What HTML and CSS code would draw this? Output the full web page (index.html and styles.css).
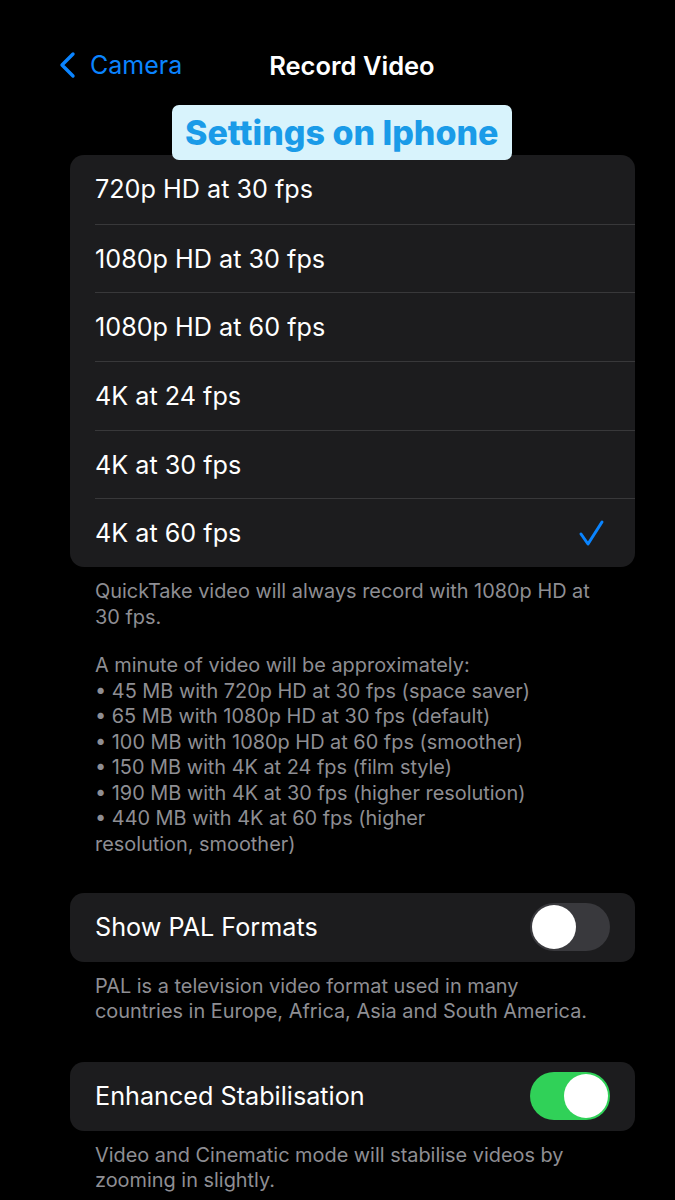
FILE: index.html
```html
<!DOCTYPE html>
<html lang="en">
<head>
    <meta charset="UTF-8">
    <meta name="viewport" content="width=device-width, initial-scale=1.0">
    <title>Record Video</title>
    <link rel="stylesheet" href="styles.css">
</head>
<body>
    <div class="screen">
        <div class="nav">
            <a class="back" href="#">
                <svg class="chevron" width="20" height="28" viewBox="0 0 20 28">
                    <polyline points="15,3 4,14 15,25" fill="none" stroke="#0a84ff" stroke-width="3.4" stroke-linecap="round" stroke-linejoin="round"/>
                </svg>
                <span>Camera</span>
            </a>
            <div class="title">Record Video</div>
        </div>

        <div class="badge-row">
            <div class="badge">Settings on Iphone</div>
        </div>

        <div class="group">
            <div class="row"><span>720p HD at 30 fps</span></div>
            <div class="row"><span>1080p HD at 30 fps</span></div>
            <div class="row"><span>1080p HD at 60 fps</span></div>
            <div class="row"><span>4K at 24 fps</span></div>
            <div class="row"><span>4K at 30 fps</span></div>
            <div class="row">
                <span>4K at 60 fps</span>
                <svg class="check" width="28" height="28" viewBox="0 0 28 28">
                    <polyline points="4,15 11,25 25,3" fill="none" stroke="#0a84ff" stroke-width="3" stroke-linecap="round" stroke-linejoin="round"/>
                </svg>
            </div>
        </div>
        <div class="note note-long">
            <p>QuickTake video will always record with 1080p HD at 30 fps.</p>
            <p>A minute of video will be approximately:<br>
            • 45 MB with 720p HD at 30 fps (space saver)<br>
            • 65 MB with 1080p HD at 30 fps (default)<br>
            • 100 MB with 1080p HD at 60 fps (smoother)<br>
            • 150 MB with 4K at 24 fps (film style)<br>
            • 190 MB with 4K at 30 fps (higher resolution)<br>
            • 440 MB with 4K at 60 fps (higher<br>
            resolution, smoother)</p>
        </div>

        <div class="group">
            <div class="row">
                <span>Show PAL Formats</span>
                <div class="toggle"><div class="knob"></div></div>
            </div>
        </div>
        <div class="note">
            <p>PAL is a television video format used in many countries in Europe, Africa, Asia and South America.</p>
        </div>

        <div class="group">
            <div class="row">
                <span>Enhanced Stabilisation</span>
                <div class="toggle on"><div class="knob"></div></div>
            </div>
        </div>
        <div class="note">
            <p>Video and Cinematic mode will stabilise videos by zooming in slightly.</p>
        </div>
    </div>
</body>
</html>
```

FILE: styles.css
```css
body {
    margin: 0;
    padding: 0;
    background-color: #000;
    color: #fff;
    font-family: Inter, "Noto Sans", sans-serif;
}
.screen {
    width: 675px;
    height: 1200px;
    overflow: hidden;
}
.nav {
    display: flex;
    align-items: center;
    height: 50px;
    padding: 40px 0 0 58px;
}
.back {
    display: flex;
    align-items: center;
    gap: 12px;
    color: #0a84ff;
    text-decoration: none;
    font-size: 25px;
}
.chevron {
    display: block;
}
.title {
    margin-left: 87px;
    font-size: 25.5px;
    font-weight: 600;
}
.badge-row {
    display: flex;
    padding: 15px 0 0 172px;
    margin-bottom: -5px;
    position: relative;
    z-index: 1;
}
.badge {
    background-color: #d8f3fc;
    color: #1a9be8;
    font-size: 34px;
    font-weight: 800;
    line-height: 55px;
    padding: 0 13px;
    border-radius: 7px;
}
.group {
    background-color: #1c1c1e;
    border-radius: 14px;
    margin: 0 40px 0 70px;
    padding-left: 25px;
}
.row {
    display: flex;
    align-items: center;
    justify-content: space-between;
    box-sizing: border-box;
    height: 68.7px;
    padding-right: 25px;
    font-size: 25.2px;
    border-top: 1px solid #38383a;
}
.row:first-child {
    border-top: none;
}
.check {
    display: block;
    margin-right: 5px;
}
.note {
    margin: 0 78px 0 95px;
    padding: 12px 0 37px;
    color: #8e8e93;
    font-size: 19.9px;
    line-height: 25.5px;
}
.note-long {
    padding-bottom: 36px;
}
.note p {
    margin: 0 0 23px;
}
.note p:last-child {
    margin-bottom: 0;
}
.toggle {
    width: 80px;
    height: 48px;
    border-radius: 24px;
    background-color: #39393d;
    display: flex;
    align-items: center;
    padding: 0 2px;
    box-sizing: border-box;
}
.toggle.on {
    background-color: #30d158;
    justify-content: flex-end;
}
.knob {
    width: 44px;
    height: 44px;
    border-radius: 50%;
    background-color: #fff;
}
```
